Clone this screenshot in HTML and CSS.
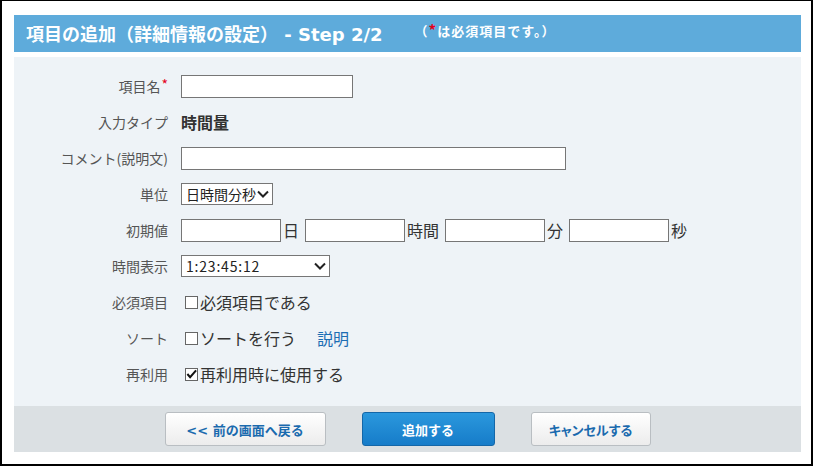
FILE: index.html
```html
<!DOCTYPE html>
<html lang="ja">
<head>
<meta charset="utf-8">
<title>項目の追加</title>
<link rel="stylesheet" href="styles.css">
</head>
<body>
<div class="frame">
  <div class="header">
    <h1 class="title">項目の追加（詳細情報の設定）<span class="latin"> - Step 2/2</span></h1>
    <span class="note">（<span class="req">*</span>は必須項目です。）</span>
  </div>
  <div class="content">
    <div class="form">
      <div class="label">項目名<span class="req-mark">*</span></div>
      <div class="value"><input class="text text-name" type="text"></div>

      <div class="label">入力タイプ</div>
      <div class="value"><span class="strong">時間量</span></div>

      <div class="label">コメント(説明文)</div>
      <div class="value"><input class="text text-comment" type="text"></div>

      <div class="label">単位</div>
      <div class="value">
        <div class="select select-unit"><span>日時間分秒</span>
          <svg class="chev" width="12" height="8" viewBox="0 0 12 8"><path d="M1 1.5 L6 6.5 L11 1.5" fill="none" stroke="#222" stroke-width="2"/></svg>
        </div>
      </div>

      <div class="label">初期値</div>
      <div class="value initial">
        <input class="text text-num" type="text"><span class="unit">日</span>
        <input class="text text-num" type="text"><span class="unit">時間</span>
        <input class="text text-num" type="text"><span class="unit">分</span>
        <input class="text text-num" type="text"><span class="unit">秒</span>
      </div>

      <div class="label">時間表示</div>
      <div class="value">
        <div class="select select-time"><span class="digits">1:23:45:12</span>
          <svg class="chev" width="12" height="8" viewBox="0 0 12 8"><path d="M1 1.5 L6 6.5 L11 1.5" fill="none" stroke="#222" stroke-width="2"/></svg>
        </div>
      </div>

      <div class="label">必須項目</div>
      <div class="value"><span class="check"></span><span class="big">必須項目である</span></div>

      <div class="label">ソート</div>
      <div class="value"><span class="check"></span><span class="big">ソートを行う</span><a class="link" href="#">説明</a></div>

      <div class="label">再利用</div>
      <div class="value"><span class="check checked"><svg width="12" height="12" viewBox="0 0 12 12"><path d="M1.5 6 L4.5 9.5 L11 2" fill="none" stroke="#111" stroke-width="2.2"/></svg></span><span class="big">再利用時に使用する</span></div>
    </div>
  </div>
  <div class="footer">
    <button class="btn btn-back" type="button"><span class="arrows">&lt;&lt; </span>前の画面へ戻る</button>
    <button class="btn btn-primary" type="button">追加する</button>
    <button class="btn btn-cancel" type="button">キャンセルする</button>
  </div>
</div>
</body>
</html>
```
FILE: styles.css
```css
html, body {
  margin: 0;
  padding: 0;
  background: #fff;
}
body {
  font-family: "Noto Sans CJK JP", "Noto Sans", sans-serif;
}
.frame {
  width: 813px;
  height: 466px;
  box-sizing: border-box;
  border-top: 1px solid #000;
  border-left: 2px solid #000;
  border-right: 2px solid #000;
  border-bottom: 2px solid #000;
  padding: 14px 10px 0 12px;
}
.header {
  height: 37px;
  background: #5eabdb;
  display: flex;
  align-items: flex-start;
}
.title {
  margin: 0;
  padding-left: 12px;
  font-size: 18px;
  font-weight: bold;
  line-height: 37px;
  color: #fff;
  white-space: nowrap;
}
.latin {
  font-family: "DejaVu Sans", "Noto Sans", sans-serif;
  font-size: 18px;
}
.note {
  margin-left: 32px;
  margin-top: 6px;
  font-size: 13px;
  font-weight: bold;
  line-height: 17px;
  letter-spacing: 1px;
  color: #fff;
  white-space: nowrap;
}
.req {
  color: #e4001b;
  font-size: 15px;
}
.content {
  margin-top: 5px;
  background: #eef3f7;
  padding: 11px 0 14px;
}
.form {
  display: grid;
  grid-template-columns: 154px 1fr;
  grid-auto-rows: 36px;
  column-gap: 13px;
}
.label {
  display: flex;
  align-items: center;
  justify-content: flex-end;
  font-size: 14px;
  color: #555;
  white-space: nowrap;
}
.req-mark {
  color: #e4001b;
  font-size: 14px;
  line-height: 14px;
  align-self: flex-start;
  margin-top: 9px;
  margin-left: 1px;
}
.value {
  display: flex;
  align-items: center;
  font-size: 16px;
  color: #333;
  white-space: nowrap;
}
.strong {
  font-weight: bold;
  font-size: 16px;
  color: #333;
}
.text {
  box-sizing: border-box;
  height: 23px;
  border: 1px solid #767676;
  background: #fff;
  margin: 0;
  padding: 0 3px;
  font-size: 14px;
}
.text-name { width: 172px; }
.text-comment { width: 385px; }
.text-num { width: 100px; }
.unit {
  font-size: 16px;
  color: #333;
  margin-left: 2px;
  margin-right: 6px;
}
.select {
  box-sizing: border-box;
  height: 22px;
  border: 1px solid #767676;
  background: #fff;
  display: flex;
  align-items: center;
  justify-content: space-between;
  padding: 0 3px 0 4px;
  font-size: 14px;
  color: #222;
}
.digits { letter-spacing: 0.8px; }
.select-unit { width: 92px; }
.select-time { width: 149px; }
.chev { display: block; }
.check {
  box-sizing: border-box;
  width: 13px;
  height: 13px;
  border: 1px solid #666;
  background: #fff;
  margin-left: 4px;
  margin-right: 2px;
  display: flex;
  align-items: center;
  justify-content: center;
}
.check svg { display: block; }
.big {
  font-size: 16px;
  color: #333;
}
.link {
  margin-left: 21px;
  color: #1c6db3;
  text-decoration: none;
  font-size: 16px;
}
.footer {
  height: 46px;
  box-sizing: border-box;
  background: #dbe0e3;
  display: flex;
  justify-content: center;
  align-items: flex-start;
  gap: 36px;
  padding-top: 6px;
}
.btn {
  box-sizing: border-box;
  height: 34px;
  border-radius: 3px;
  font-family: "Noto Sans CJK JP", "Noto Sans", sans-serif;
  font-size: 13px;
  font-weight: bold;
  cursor: pointer;
  padding: 0;
}
.arrows {
  font-family: "DejaVu Sans", "Noto Sans", sans-serif;
  font-size: 13px;
}
.btn-back, .btn-cancel {
  background: linear-gradient(#ffffff, #ececec);
  border: 1px solid #b9bec2;
  color: #1a6aae;
}
.btn-cancel { font-feature-settings: "palt"; }
.btn-back { width: 161px; }
.btn-cancel { width: 120px; }
.btn-primary {
  width: 133px;
  background: linear-gradient(#2b98dd, #167cc9);
  border: 1px solid #1467a8;
  color: #fff;
}
```
